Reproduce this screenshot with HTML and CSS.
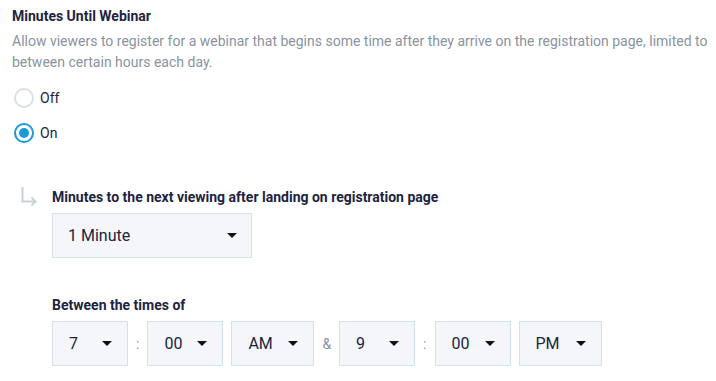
FILE: index.html
```html
<!DOCTYPE html>
<html>
<head>
<meta charset="utf-8">
<link rel="stylesheet" href="styles.css">
</head>
<body>
<div class="page">
  <h2 class="title">Minutes Until Webinar</h2>
  <p class="desc">Allow viewers to register for a webinar that begins some time after they arrive on the registration page, limited to between certain hours each day.</p>
  <div class="radios">
    <label class="radio"><span class="dot"></span><span class="radio-text">Off</span></label>
    <label class="radio checked"><span class="dot"></span><span class="radio-text">On</span></label>
  </div>
  <div class="sub">
    <svg class="arrow" width="16" height="20" viewBox="0 0 16 20">
      <path d="M1.5 0 V14.5 H14.5 M10.5 10.5 L14.5 14.5 L10.5 18.5" fill="none" stroke="#c9d2d9" stroke-width="2"/>
    </svg>
    <div class="sub-body">
      <div class="label">Minutes to the next viewing after landing on registration page</div>
      <div class="select wide"><span>1 Minute</span><span class="caret"></span></div>
      <div class="label between">Between the times of</div>
      <div class="times">
        <div class="select num"><span>7</span><span class="caret"></span></div>
        <span class="sep">:</span>
        <div class="select num"><span>00</span><span class="caret"></span></div>
        <div class="select ampm"><span>AM</span><span class="caret"></span></div>
        <span class="sep amp">&amp;</span>
        <div class="select num"><span>9</span><span class="caret"></span></div>
        <span class="sep">:</span>
        <div class="select num"><span>00</span><span class="caret"></span></div>
        <div class="select ampm"><span>PM</span><span class="caret"></span></div>
      </div>
    </div>
  </div>
</div>
</body>
</html>
```
FILE: styles.css
```css
html, body {
  margin: 0;
  padding: 0;
  background: #ffffff;
}
body {
  font-family: Roboto, "Liberation Sans", sans-serif;
  color: #1d2440;
}
.page {
  padding: 6px 0 0 12px;
  width: 700px;
}
.title {
  margin: 0;
  font-size: 14px;
  font-weight: 700;
  line-height: 20px;
  color: #1d2440;
}
.desc {
  margin: 5px 0 0 0;
  font-size: 14px;
  line-height: 21px;
  color: #8a93a1;
}
.radios {
  margin-top: 14.5px;
  display: flex;
  flex-direction: column;
  gap: 15px;
}
.radio {
  display: flex;
  align-items: center;
  height: 20px;
  font-size: 14px;
  color: #1d2440;
}
.dot {
  box-sizing: border-box;
  width: 20px;
  height: 20px;
  margin-left: 2px;
  border-radius: 50%;
  border: 2px solid #d6e1e7;
  background: #fff;
  display: flex;
  align-items: center;
  justify-content: center;
}
.radio.checked .dot {
  border-color: #1a9ad6;
}
.radio.checked .dot::after {
  content: "";
  width: 10px;
  height: 10px;
  border-radius: 50%;
  background: #1a9ad6;
}
.radio-text {
  margin-left: 6px;
}
.sub {
  margin-top: 44.5px;
  margin-left: 9px;
  display: flex;
  align-items: flex-start;
}
.arrow {
  display: block;
  margin-right: 15px;
}
.label {
  font-size: 14px;
  font-weight: 700;
  line-height: 20px;
  color: #1d2440;
}
.select {
  box-sizing: border-box;
  height: 45px;
  border: 1px solid #d5e1e8;
  background: #f4f6fa;
  display: flex;
  align-items: center;
  justify-content: space-between;
  padding: 0 14px 0 15px;
  font-size: 16px;
  color: #1d2440;
}
.select.wide {
  width: 200px;
  margin-top: 6px;
}
.label.between {
  margin-top: 37px;
}
.times {
  margin-top: 6px;
  display: flex;
  align-items: center;
  gap: 8px;
}
.select.num {
  width: 76px;
  padding: 0 15px 0 16px;
}
.select.ampm {
  width: 83px;
  padding: 0 15px 0 16px;
}
.caret {
  width: 0;
  height: 0;
  border-left: 5px solid transparent;
  border-right: 5px solid transparent;
  border-top: 5px solid #111;
}
.sep {
  font-size: 14px;
  color: #8a93a1;
}
```
